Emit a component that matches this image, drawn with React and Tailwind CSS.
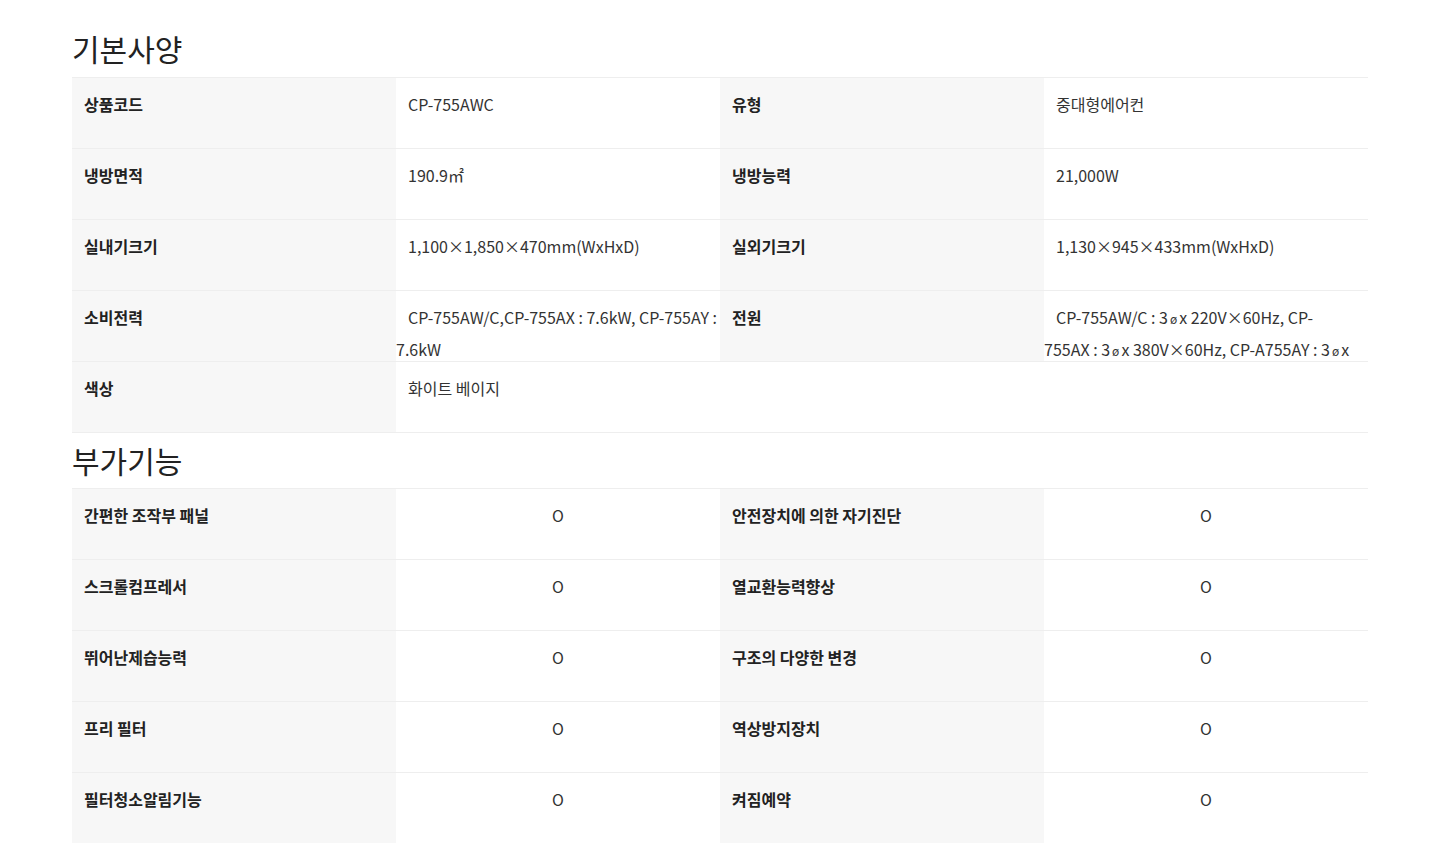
const basicSpecs = [
  ['상품코드', 'CP-755AWC', '유형', '중대형에어컨'],
  ['냉방면적', '190.9㎡', '냉방능력', '21,000W'],
  ['실내기크기', '1,100×1,850×470mm(WxHxD)', '실외기크기', '1,130×945×433mm(WxHxD)'],
  [
    '소비전력',
    'CP-755AW/C,CP-755AX : 7.6kW, CP-755AY : 7.6kW',
    '전원',
    ['CP-755AW/C : 3øx 220V×60Hz, CP-', '755AX : 3øx 380V×60Hz, CP-A755AY : 3øx 380V×60Hz'],
  ],
  ['색상', '화이트 베이지', null, null],
];

const extraFeatures = [
  ['간편한 조작부 패널', '안전장치에 의한 자기진단'],
  ['스크롤컴프레서', '열교환능력향상'],
  ['뛰어난제습능력', '구조의 다양한 변경'],
  ['프리 필터', '역상방지장치'],
  ['필터청소알림기능', '켜짐예약'],
];

// the phase mark is set small in the original
function fmt(text) {
  return text.split('ø').flatMap((part, i) =>
    i === 0
      ? [part]
      : [<span key={i} className="text-[12px] leading-none px-[2px]">ø</span>, part]
  );
}

function Label({ children }) {
  return (
    <div className="bg-[#f7f7f7] px-3 pt-[10px] font-bold text-[#222] overflow-hidden">
      {children}
    </div>
  );
}

function Value({ children, center }) {
  if (center) {
    return <div className="pt-[10px] text-center text-[#333] overflow-hidden">{children}</div>;
  }
  const lines = Array.isArray(children) ? children : children ? [children] : [];
  return (
    <div className="pt-[10px] text-[#333] overflow-hidden">
      {lines.length > 0 && (
        <span className="pl-3">
          {lines.map((line, i) => (
            <span key={i}>
              {i > 0 && <br />}
              {fmt(line)}
            </span>
          ))}
        </span>
      )}
    </div>
  );
}

function Title({ children, first }) {
  return (
    <h2
      className={`${first ? 'pt-[20px] h-[57px] leading-[57px]' : 'h-[55px] leading-[55px]'} box-content text-[30px] text-[#222] font-normal`}
    >
      {children}
    </h2>
  );
}

export default function App() {
  return (
    <div
      className="bg-white min-h-screen text-[16px] leading-[32px]"
      style={{ fontFamily: '"Noto Sans CJK KR", "Noto Sans", sans-serif' }}
    >
      <div className="max-w-[1296px] mx-auto">
        <Title first>기본사양</Title>
        <div className="border-b border-[#eeeeee]">
          {basicSpecs.map(([l1, v1, l2, v2]) => (
            <div key={l1} className="grid grid-cols-4 h-[71px] border-t border-[#eeeeee]">
              <Label>{l1}</Label>
              <Value>{v1}</Value>
              {l2 ? <Label>{l2}</Label> : <div />}
              <Value>{v2}</Value>
            </div>
          ))}
        </div>

        <Title>부가기능</Title>
        <div className="border-b border-[#eeeeee]">
          {extraFeatures.map(([l1, l2]) => (
            <div key={l1} className="grid grid-cols-4 h-[71px] border-t border-[#eeeeee]">
              <Label>{l1}</Label>
              <Value center>O</Value>
              <Label>{l2}</Label>
              <Value center>O</Value>
            </div>
          ))}
        </div>
      </div>
    </div>
  );
}
